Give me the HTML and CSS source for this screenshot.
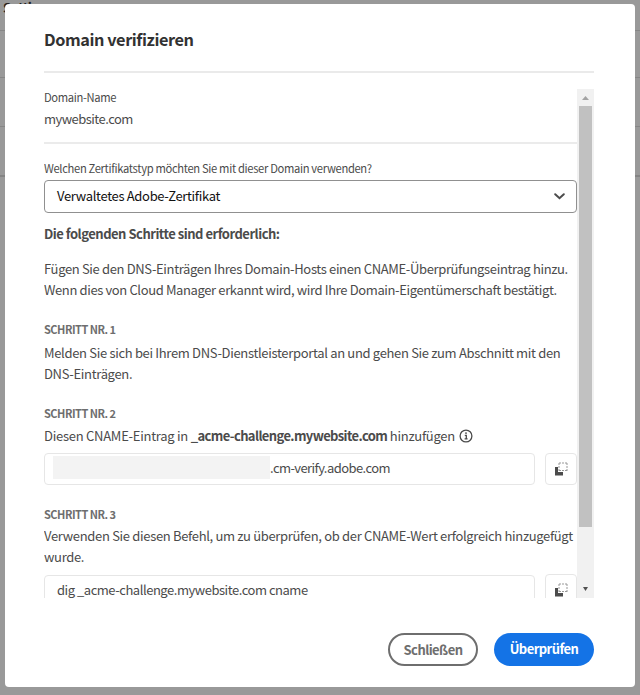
FILE: index.html
```html
<!DOCTYPE html>
<html lang="de">
<head>
<meta charset="utf-8">
<title>Domain verifizieren</title>
<link rel="stylesheet" href="styles.css">
</head>
<body>
<div class="page">
  <div class="page-title">Settings</div>
  <div class="page-row"></div>
  <div class="page-row"></div>
  <div class="page-row"></div>
  <div class="page-row last"></div>
</div>
<main class="dialog">
  <h1 class="title">Domain verifizieren</h1>
  <div class="scroll">
    <div class="content">
      <section class="domain">
        <div class="label">Domain-Name</div>
        <div class="value">mywebsite.com</div>
      </section>
      <div class="label question">Welchen Zertifikatstyp möchten Sie mit dieser Domain verwenden?</div>
      <div class="select">
        <span class="choice">Verwaltetes Adobe-Zertifikat</span>
        <svg class="chevron" viewBox="0 0 11 7"><path d="M1.2 1.2l4.3 4 4.3-4"/></svg>
      </div>
      <h2 class="subtitle">Die folgenden Schritte sind erforderlich:</h2>
      <p class="text intro"><span class="tight">Fügen Sie den DNS-Einträgen Ihres Domain-Hosts einen CNAME-Überprüfungseintrag hinzu.</span><br><span class="tighter">Wenn dies von Cloud Manager erkannt wird, wird Ihre Domain-Eigentümerschaft bestätigt.</span></p>
      <h3 class="step">SCHRITT NR. 1</h3>
      <p class="text">Melden Sie sich bei Ihrem DNS-Dienstleisterportal an und gehen Sie zum Abschnitt mit den<br>DNS-Einträgen.</p>
      <h3 class="step second">SCHRITT NR. 2</h3>
      <p class="text cname"><span>Diesen CNAME-Eintrag in <b>_acme-challenge.mywebsite.com</b> hinzufügen</span>
        <svg class="info" viewBox="0 0 14 14"><circle cx="7" cy="7" r="5.9"/><path d="M5.8 6.3h1.5v3.5M5.6 9.9h3"/><circle class="dot" cx="7" cy="4.1" r="0.9"/></svg></p>
      <div class="copy-row">
        <div class="field"><span class="redacted"></span><span class="host">.cm-verify.adobe.com</span></div>
        <div class="copy"><svg viewBox="0 0 14 14"><path class="back" d="M1 5h3v5h5v3.5H1z"/><path class="front" d="M5 1h8.5M5 8.5h8.5M5 1v8M13 1v8"/></svg></div>
      </div>
      <h3 class="step third">SCHRITT NR. 3</h3>
      <p class="text">Verwenden Sie diesen Befehl, um zu überprüfen, ob der CNAME-Wert erfolgreich hinzugefügt<br>wurde.</p>
      <div class="copy-row command">
        <div class="field"><span class="cmd">dig _acme-challenge.mywebsite.com cname</span></div>
        <div class="copy"><svg viewBox="0 0 14 14"><path class="back" d="M1 5h3v5h5v3.5H1z"/><path class="front" d="M5 1h8.5M5 8.5h8.5M5 1v8M13 1v8"/></svg></div>
      </div>
    </div>
    <div class="scrollbar">
      <svg class="up" viewBox="0 0 7 4"><path d="M0 4L3.5 0 7 4z"/></svg>
      <div class="thumb"></div>
      <svg class="down" viewBox="0 0 5 4"><path d="M0 0h5L2.5 4z"/></svg>
    </div>
  </div>
  <footer class="actions">
    <div class="button outline">Schließen</div>
    <div class="button primary">Überprüfen</div>
  </footer>
</main>
</body>
</html>
```

FILE: styles.css
```css
* { box-sizing: border-box; }
body {
  margin: 0;
  width: 640px;
  height: 695px;
  padding: 4px 5px 8px;
  overflow: hidden;
  background: #999;
  color: #4b4b4b;
  font-family: "Noto Sans CJK SC", "Noto Sans", sans-serif;
  font-size: 13px;
  letter-spacing: -0.325px;
}
h1, h2, h3, p { margin: 0; }
.page { position: absolute; inset: 0; z-index: -1; }
.page-title { height: 30px; padding-left: 3px; font-size: 13.5px; font-weight: 700; line-height: 15px; letter-spacing: -0.6px; color: #222; }
.page-row { height: 47px; border-top: 1px solid #868686; }
.page-row + .page-row { height: 49px; }
.page-row.last { border-top: 2px solid #848484; }
.dialog {
  display: flex;
  flex-direction: column;
  height: 683px;
  padding: 0 41px 0 39px;
  background: #fff;
  border-radius: 4px;
}
.title {
  height: 69px;
  padding-top: 23px;
  border-bottom: 2px solid #eaeaea;
  color: #323232;
  font-size: 16.3px;
  font-weight: 700;
  line-height: 24px;
  letter-spacing: -0.42px;
}
.scroll { display: flex; height: 509px; margin-top: 16px; overflow: hidden; }
.content { width: 533px; height: 509px; overflow: hidden; white-space: nowrap; }
.domain { height: 55px; border-bottom: 2px solid #ebebeb; }
.label { height: 16px; font-size: 11.2px; line-height: 16px; letter-spacing: -0.33px; }
.value { height: 21px; margin-top: 4px; line-height: 20px; letter-spacing: -0.53px; }
.question { margin-top: 16px; }
.select {
  display: flex;
  align-items: center;
  justify-content: space-between;
  height: 33px;
  margin-top: 4px;
  padding: 0 11px 0 12px;
  border: 1px solid #909090;
  border-radius: 4px;
  color: #111;
}
.choice { padding-bottom: 2px; letter-spacing: -0.33px; }
.chevron { width: 11px; height: 7px; fill: none; stroke: #4b4b4b; stroke-width: 2; stroke-linecap: round; }
.subtitle { margin-top: 10px; font-size: 13px; line-height: 21px; letter-spacing: -0.49px; }
.text { line-height: 21px; }
.tight { letter-spacing: -0.35px; }
.tighter { letter-spacing: -0.375px; }
.intro { margin-top: 14px; }
.step { margin: 21px 0 5px; color: #6e6e6e; font-size: 11px; line-height: 16px; letter-spacing: -0.5px; }
.second { margin-bottom: 4px; }
.third { margin-bottom: 3px; }
.cname { display: flex; align-items: center; gap: 4px; letter-spacing: -0.26px; }
.cname b { letter-spacing: -0.62px; }
.info { width: 14px; height: 14px; fill: none; stroke: #4b4b4b; stroke-width: 1.3; }
.info .dot { fill: #4b4b4b; stroke: none; }
.copy-row { display: flex; gap: 10px; margin-top: 7px; }
.field {
  display: flex;
  align-items: center;
  width: 491px;
  height: 32px;
  padding: 0 0 3px 8px;
  border: 1px solid #e6e6e6;
  border-radius: 4px;
}
.redacted { width: 217px; height: 23px; margin-top: -1px; background: #f3f3f3; }
.host { letter-spacing: -0.57px; }
.cmd { padding-left: 4px; letter-spacing: -0.47px; }
.copy {
  display: flex;
  align-items: center;
  justify-content: center;
  width: 32px;
  height: 32px;
  border: 1px solid #e6e6e6;
  border-radius: 4px;
}
.copy svg { width: 14px; height: 14px; }
.back { fill: #4b4b4b; }
.front { fill: none; stroke: #999; stroke-dasharray: 2 1; }
.command .copy { margin-top: -1px; }
.command { margin-top: 8px; }
.scrollbar { display: flex; flex-direction: column; align-items: center; width: 17px; background: #f1f1f1; }
.up { width: 7px; height: 4px; margin: 7px 0 6px; fill: #a3a3a3; }
.thumb { width: 13px; height: 421px; background: #c1c1c1; }
.down { width: 5px; height: 4px; margin-top: 60px; fill: #505050; }
.actions { display: flex; justify-content: flex-end; gap: 16px; margin-top: 35px; }
.button {
  display: flex;
  align-items: center;
  justify-content: center;
  height: 33px;
  padding-bottom: 2px;
  border-radius: 17px;
  font-weight: 700;
  letter-spacing: -0.55px;
}
.outline { width: 90px; padding-bottom: 1px; border: 2px solid #6e6e6e; color: #6e6e6e; }
.primary { width: 100px; background: #1473e6; color: #fff; }
```
